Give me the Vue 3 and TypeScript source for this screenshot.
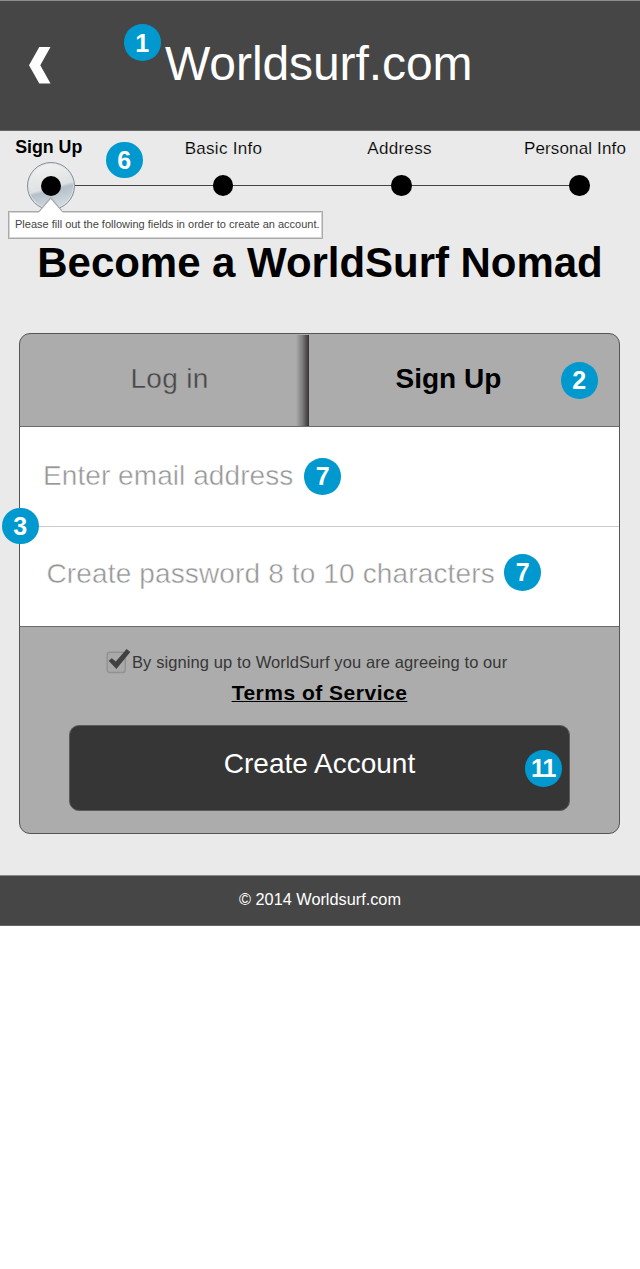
<script setup lang="ts">
interface Step {
  label: string
  key: string
  active: boolean
}

const steps: Step[] = [
  { label: 'Sign Up', key: 'signup', active: true },
  { label: 'Basic Info', key: 'basic', active: false },
  { label: 'Address', key: 'address', active: false },
  { label: 'Personal Info', key: 'personal', active: false },
]
</script>

<template>
  <div class="page">
    <header class="header">
      <svg class="back" width="22" height="37" viewBox="0 0 22 37">
        <path d="M10.3 0H21.5L11.3 18.2L21.5 36.5H10.3L0 18.2Z" fill="#fff" />
      </svg>
      <h1 class="brand">Worldsurf.com</h1>
      <span class="badge b1">1</span>
    </header>

    <main class="main">
      <nav class="steps">
        <div v-for="s in steps" :key="s.key" class="step" :class="[s.key, { active: s.active }]">
          <span class="label">{{ s.label }}</span>
          <span class="marker"><i class="dot"></i></span>
        </div>
        <span class="badge b6">6</span>
        <div class="tip">
          <svg class="arrow" width="26" height="16" viewBox="0 0 26 16">
            <path d="M1 14.7L12.7 1L24.5 14.7V16H1Z" fill="#fff" />
            <path d="M1 14.7L12.7 1L24.5 14.7" fill="none" stroke="#aaa" stroke-width="1.2" />
          </svg>
          <span class="tip-text">Please fill out the following fields in order to create an account.</span>
        </div>
      </nav>

      <h2 class="title">Become a WorldSurf Nomad</h2>

      <section class="card">
        <div class="tabs">
          <div class="tab login"><span>Log in</span></div>
          <div class="tab signup-tab"><span>Sign Up</span></div>
          <span class="badge b2">2</span>
        </div>
        <div class="fields">
          <div class="field email"><span>Enter email address</span><b class="badge inline">7</b></div>
          <div class="field password"><span>Create password 8 to 10 characters</span><b class="badge inline">7</b></div>
          <span class="badge b3">3</span>
        </div>
        <div class="bottom">
          <div class="agree">
            <svg class="check" width="26" height="26" viewBox="0 0 26 26">
              <rect x="1.2" y="4.2" width="18" height="20.3" rx="2.5" fill="#a9a9a9" stroke="#919191" stroke-width="1.4" />
              <path d="M2.6 12.8L5.8 10.2L9.8 13.6L20.6 1L24.3 4L10.4 21Z" fill="#414141" />
            </svg>
            <span>By signing up to WorldSurf you are agreeing to our</span>
          </div>
          <a class="terms">Terms of Service</a>
          <button class="create">
            <span>Create Account</span>
            <b class="badge b11">11</b>
          </button>
        </div>
      </section>
    </main>

    <footer class="footer">© 2014 Worldsurf.com</footer>
  </div>
</template>

<style>
body {
  margin: 0;
  background: #fff;
}
</style>

<style scoped>
.page {
  width: 640px;
  height: 1269px;
  font-family: "Liberation Sans", Arial, sans-serif;
  color: #000;
  overflow: hidden;
}
.page * {
  box-sizing: border-box;
}
.page span,
.page a {
  white-space: nowrap;
}
.header {
  position: relative;
  height: 131px;
  display: flex;
  background: #464646;
  border-top: 1px solid #8b8d8c;
  border-bottom: 1px solid #666;
}
.back {
  margin: 46px 0 0 29px;
}
.brand {
  margin: 35px 0 0 114px;
  font-size: 48px;
  line-height: 56px;
  font-weight: 400;
  letter-spacing: -0.08px;
  color: #fff;
}
.badge {
  position: absolute;
  width: 36.6px;
  height: 36.6px;
  border-radius: 50%;
  background: #0099cf;
  color: #fff;
  font-size: 25px;
  font-weight: 700;
  line-height: 37px;
  text-align: center;
}
.badge.inline {
  position: static;
  flex: none;
  line-height: 36px;
}
.b1 { left: 124px; top: 23px; line-height: 38px; }
.main {
  height: 744px;
  background: #eaeaea;
  overflow: hidden;
}
.steps {
  position: relative;
  height: 108px;
  display: grid;
  grid-template-columns: 102px 243px 113px 182px;
}
.steps::before {
  content: "";
  position: absolute;
  left: 51px;
  right: 61px;
  top: 54px;
  height: 1px;
  background: #444;
}
.step {
  display: flex;
  flex-direction: column;
  align-items: center;
}
.label {
  margin: 8px 0 -1px;
  height: 20px;
  line-height: 20px;
  font-size: 17px;
  letter-spacing: 0.3px;
  -webkit-text-stroke: 0.15px #eaeaea;
}
.signup .label {
  font-size: 17.8px;
  font-weight: 700;
  letter-spacing: 0;
  margin: 6px 4.5px 1px 0;
  -webkit-text-stroke: 0;
}
.address .label { margin-right: 4px; }
.marker {
  position: relative;
  width: 20.6px;
  height: 20.6px;
  margin-top: 17px;
}
.dot {
  display: block;
  width: 20.6px;
  height: 20.6px;
  border-radius: 50%;
  background: #000;
}
.basic .marker { margin-right: 1px; }
.personal { align-items: flex-start; }
.personal .label { margin-left: 66px; letter-spacing: 0.14px; }
.personal .marker { margin-left: 111px; }
.active .marker {
  width: 48px;
  height: 48px;
  margin-top: 4px;
  padding: 12.6px 12.6px;
  border: 1px solid #829099;
  border-radius: 50%;
  background: linear-gradient(165deg, #f0f1ef 10%, #dfe2e3 52%, #b4bfc8 58%, #d5dde3 90%);
  box-shadow: inset 0 0 0 1px #e0e4e6;
}
.b6 { left: 106px; top: 10.6px; line-height: 36px; }
.tip {
  position: absolute;
  left: 8px;
  top: 80px;
  width: 315px;
  height: 28px;
  border: 1px solid #aaa;
  box-shadow: inset 0 0 0 1px #d5d5d5;
  background: #fff;
}
.arrow {
  position: absolute;
  left: 29px;
  top: -15px;
}
.tip-text {
  display: block;
  padding-left: 6px;
  font-size: 11px;
  line-height: 25px;
  color: #444;
}
.title {
  margin: 0;
  height: 94px;
  line-height: 48px;
  font-size: 42px;
  font-weight: 700;
  letter-spacing: -0.04px;
  text-align: center;
  white-space: nowrap;
}
.card {
  width: 601px;
  height: 501px;
  margin-left: 19px;
  border: 1px solid #555;
  border-radius: 11px;
  background: #acacac;
}
.tabs {
  position: relative;
  height: 93px;
  display: grid;
  grid-template-columns: 289px 1fr;
  border-bottom: 1px solid #6c6c6c;
  font-size: 28px;
  line-height: 32px;
}
.tab { padding-top: 29px; }
.login {
  padding-left: 110.5px;
  color: #484848;
  letter-spacing: 0.3px;
  margin-top: 1px;
  padding-top: 28px;
  -webkit-text-stroke: 0.35px #acacac;
  background: linear-gradient(90deg, transparent, #7c7a7b 50%, #353132) right / 13px 100% no-repeat;
}
.signup-tab {
  padding-left: 86.5px;
  font-weight: 700;
}
.b2 { left: 541px; top: 28px; }
.fields {
  position: relative;
  height: 200px;
  background: #fff;
  border-bottom: 1px solid #6c6c6c;
}
.field {
  height: 99px;
  display: flex;
  align-items: center;
  font-size: 28px;
  color: #969696;
}
.field span { -webkit-text-stroke: 0.45px #fff; }
.email {
  height: 100px;
  padding-left: 23px;
  border-bottom: 1px solid #ccc;
  gap: 11px;
}
.email span { margin-top: -2px; letter-spacing: 0.07px; }
.password {
  padding: 0 0 8px 26.5px;
  gap: 9.5px;
}
.password span { margin-top: 2px; letter-spacing: 0.14px; }
.b3 { left: -18px; top: 80.5px; line-height: 36px; }
.bottom {
  display: flex;
  flex-direction: column;
  align-items: center;
}
.agree {
  align-self: flex-start;
  display: flex;
  height: 26px;
  margin: 21px 0 0 86px;
  font-size: 16.5px;
  line-height: 29px;
  letter-spacing: 0.1px;
  color: #373737;
}
.terms {
  margin-top: 7px;
  height: 24px;
  line-height: 24px;
  font-size: 21px;
  font-weight: 700;
  letter-spacing: 0.5px;
  text-decoration: underline;
  text-decoration-thickness: 1px;
  text-underline-offset: 1px;
  text-decoration-skip-ink: none;
}
.create {
  position: relative;
  width: 501px;
  height: 86px;
  margin-top: 20px;
  padding: 0 0 8px;
  border: 1px solid #5c5c5c;
  border-radius: 10px;
  background: #363636;
  color: #fff;
  font-family: inherit;
  font-size: 28px;
}
.b11 { left: 455px; top: 24px; letter-spacing: -1px; }
.footer {
  height: 51px;
  border-top: 1px solid #888;
  border-bottom: 1px solid #666;
  background: #464646;
  color: #fff;
  font-size: 16.3px;
  line-height: 47px;
  text-align: center;
}
</style>
